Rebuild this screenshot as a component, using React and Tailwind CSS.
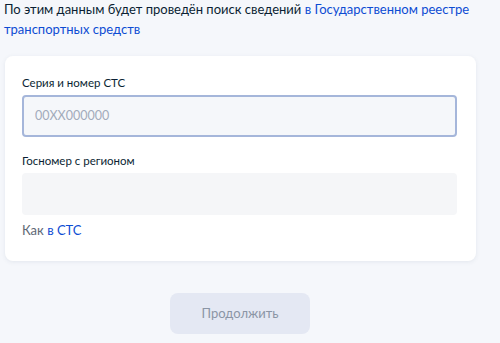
import React from 'react';

const App = () => (
  <div className="w-[500px] h-[343px] overflow-hidden bg-[#f5f7fb] font-['Lato','Noto_Sans',sans-serif] text-[#0b1f33]">
    <p className="pl-[4px] pr-4 text-[13px] leading-[20px] -mt-[1px]">
      По этим данным будет проведён поиск сведений{' '}
      <span className="text-[#0d4cd3]">в Государственном реестре транспортных средств</span>
    </p>

    <div className="ml-[5px] mt-[17px] w-[471px] h-[205px] bg-white rounded-[8px] shadow-[0_1px_4px_rgba(102,119,136,0.12)] px-[17px] pt-[18px]">
      <label className="block text-[11.5px] leading-[18px] text-[#0b1f33]">Серия и номер СТС</label>
      <div className="mt-[3px] w-[435px] h-[42px] rounded-[4px] border-2 border-[#a5b6da] bg-[#f5f7fa] flex items-center px-[11px]">
        <span className="text-[12.5px] text-[#a2abbb]">00XX000000</span>
      </div>

      <label className="block mt-[15px] text-[11.5px] leading-[18px] text-[#0b1f33]">Госномер с регионом</label>
      <div className="mt-[3px] w-[435px] h-[42px] rounded-[4px] bg-[#f5f6f8]" />

      <p className="mt-[6px] text-[13px] leading-[18px] text-[#5e6875]">
        Как <span className="text-[#0d4cd3]">в СТС</span>
      </p>
    </div>

    <div className="flex justify-center pt-[32px] pr-[20px]">
      <button className="w-[140px] h-[41px] rounded-[8px] bg-[#e4e8f3] text-[13px] text-[#8b95a5]">
        Продолжить
      </button>
    </div>
  </div>
);

export default App;
